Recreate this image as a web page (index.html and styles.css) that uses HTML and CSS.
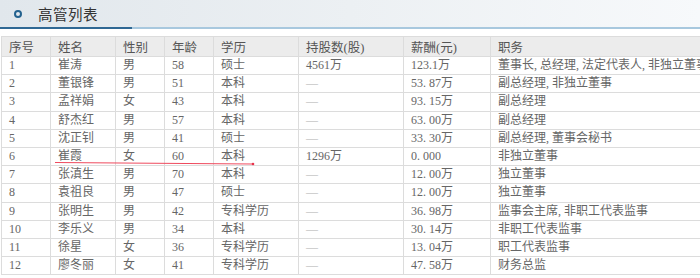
FILE: index.html
```
<!DOCTYPE html>
<html lang="zh">
<head>
<meta charset="utf-8">
<link rel="stylesheet" href="styles.css">
</head>
<body>
<div class="page">
  <div class="titlebar">
    <span class="ring"></span>
    <span class="title">高管列表</span>
  </div>
  <div class="rule"></div>
  <div class="tablewrap">
    <table class="grid">
      <colgroup>
        <col class="c1"><col class="c2"><col class="c3"><col class="c4"><col class="c5"><col class="c6"><col class="c7"><col class="c8">
      </colgroup>
      <thead>
        <tr><th>序号</th><th>姓名</th><th>性别</th><th>年龄</th><th>学历</th><th>持股数(股)</th><th>薪酬(元)</th><th>职务</th></tr>
      </thead>
      <tbody>
        <tr><td>1</td><td>崔涛</td><td>男</td><td>58</td><td>硕士</td><td>4561万</td><td>123.1万</td><td>董事长, 总经理, 法定代表人, 非独立董事</td></tr>
        <tr><td>2</td><td>董银锋</td><td>男</td><td>51</td><td>本科</td><td class="dash">—</td><td>53. 87万</td><td>副总经理, 非独立董事</td></tr>
        <tr><td>3</td><td>孟祥娟</td><td>女</td><td>43</td><td>本科</td><td class="dash">—</td><td>93. 15万</td><td>副总经理</td></tr>
        <tr><td>4</td><td>舒杰红</td><td>男</td><td>57</td><td>本科</td><td class="dash">—</td><td>63. 00万</td><td>副总经理</td></tr>
        <tr><td>5</td><td>沈正钊</td><td>男</td><td>41</td><td>硕士</td><td class="dash">—</td><td>33. 30万</td><td>副总经理, 董事会秘书</td></tr>
        <tr><td>6</td><td>崔霞</td><td>女</td><td>60</td><td>本科</td><td>1296万</td><td>0. 000</td><td>非独立董事</td></tr>
        <tr><td>7</td><td>张滇生</td><td>男</td><td>70</td><td>本科</td><td class="dash">—</td><td>12. 00万</td><td>独立董事</td></tr>
        <tr><td>8</td><td>袁祖良</td><td>男</td><td>47</td><td>硕士</td><td class="dash">—</td><td>12. 00万</td><td>独立董事</td></tr>
        <tr><td>9</td><td>张明生</td><td>男</td><td>42</td><td>专科学历</td><td class="dash">—</td><td>36. 98万</td><td>监事会主席, 非职工代表监事</td></tr>
        <tr><td>10</td><td>李乐义</td><td>男</td><td>34</td><td>本科</td><td class="dash">—</td><td>30. 14万</td><td>非职工代表监事</td></tr>
        <tr><td>11</td><td>徐星</td><td>女</td><td>36</td><td>专科学历</td><td class="dash">—</td><td>13. 04万</td><td>职工代表监事</td></tr>
        <tr><td>12</td><td>廖冬丽</td><td>女</td><td>41</td><td>专科学历</td><td class="dash">—</td><td>47. 58万</td><td>财务总监</td></tr>
      </tbody>
    </table>
    <svg class="mark" width="220" height="10" viewBox="0 0 220 10">
      <path d="M2 3.5 Q100 4 200 5" fill="none" stroke="#ef4a5e" stroke-width="1.1"/>
      <circle cx="200" cy="5" r="1.3" fill="#e8344c"/>
    </svg>
  </div>
</div>
</body>
</html>
```
FILE: styles.css
```
html, body {
  margin: 0;
  padding: 0;
  background: #ffffff;
  overflow: hidden;
}
body {
  width: 700px;
  height: 278px;
  font-family: "Liberation Serif", "Noto Sans CJK SC", serif;
  color: #666;
}
.page {
  width: 700px;
}
.titlebar {
  height: 27px;
  display: flex;
  align-items: center;
  padding-left: 14px;
  gap: 16px;
  background: linear-gradient(to right, #e1e7ec 0%, #ecf0f3 50%, #f7f9fb 100%);
}
.ring {
  width: 4px;
  height: 4px;
  border: 2px solid #24628f;
  border-radius: 50%;
  margin-top: 1px;
}
.title {
  font-size: 14.5px;
  color: #333;
  letter-spacing: 0.5px;
}
.rule {
  height: 2px;
  background: linear-gradient(to right, #2f6894 0, #2f6894 132px, #a8c8de 132px, #a8c8de 100%);
}
.tablewrap {
  position: relative;
  margin-top: 7px;
  margin-left: 1px;
}
.grid {
  border-collapse: collapse;
  table-layout: fixed;
  width: 770px;
  font-size: 12px;
}
.c1 { width: 49px; }
.c2 { width: 65px; }
.c3 { width: 49px; }
.c4 { width: 49px; }
.c5 { width: 85px; }
.c6 { width: 105px; }
.c7 { width: 87px; }
.c8 { width: 281px; }
.grid th, .grid td {
  border: 1px solid #dcdcdc;
  padding: 0 0 0 7px;
  text-align: left;
  white-space: nowrap;
  overflow: hidden;
}
.grid th {
  height: 19px;
  background: #ececec;
  font-weight: normal;
  font-size: 12.5px;
  color: #555;
}
.grid td {
  height: 17.2px;
  line-height: 17.2px;
}
.grid td.dash {
  color: #b0b0b0;
}
.mark {
  position: absolute;
  left: 52px;
  top: 123px;
  overflow: visible;
}
```
